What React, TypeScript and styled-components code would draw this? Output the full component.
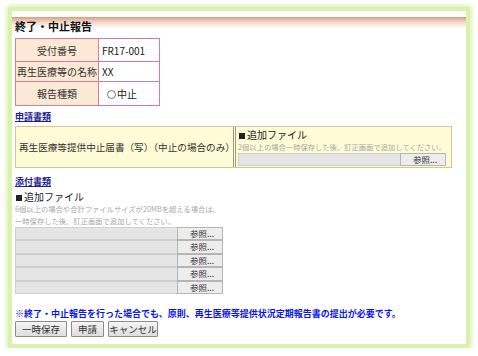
import * as React from 'react';
import styled, { createGlobalStyle } from 'styled-components';

const GlobalStyle = createGlobalStyle`
    html, body {
        margin: 0;
        padding: 0;
        background: #fff;
    }
    body {
        font-family: "Noto Sans CJK JP", "DejaVu Sans", sans-serif;
        color: #222;
    }
`;

const Frame = styled.div`
    width: 454px;
    height: 327px;
    margin: 7px 0 0 8px;
    border: 4px solid #d9f2ad;
    box-shadow: 0 0 4px 2px rgba(214, 240, 168, 0.8);
    border-radius: 2px;
    background: #fff;
    padding-top: 6px;
    box-sizing: content-box;
`;

const TitleBar = styled.div`
    height: 16px;
    line-height: 18px;
    padding-left: 3px;
    font-size: 11px;
    font-weight: 700;
    color: #111;
    background: linear-gradient(to bottom, #d89b7b 0px, #e9c2ac 3px, #f6e6dc 7px, #fff 12px);
`;

const Content = styled.div`
    padding: 0 15px 0 3px;
`;

const InfoTable = styled.table`
    margin-top: 5px;
    border-collapse: collapse;
    border: 1px solid #a3154f;
    font-size: 10px;

    td {
        border: 1px solid #d47c9c;
        padding: 0;
    }
`;

const LabelCell = styled.td<{ $h: number }>`
    width: 82px;
    height: ${p => p.$h}px;
    background: #fbe8d5;
    text-align: center;
    color: #333;
`;

const ValueCell = styled.td<{ $pad?: number }>`
    width: 52px;
    padding-left: ${p => p.$pad ?? 3}px !important;
    color: #222;
`;

const Radio = styled.span`
    display: inline-block;
    width: 7px;
    height: 7px;
    border: 1px solid #777;
    border-radius: 50%;
    margin-right: 1px;
    vertical-align: -1px;
`;

const SectionLink = styled.a<{ $top: number }>`
    display: block;
    width: fit-content;
    margin-top: ${p => p.$top}px;
    height: 12px;
    line-height: 12px;
    font-size: 9px;
    font-weight: 700;
    color: #1c1c96;
    text-decoration: underline;
    cursor: pointer;
`;

const YellowBox = styled.div`
    display: flex;
    margin-top: 3px;
    width: 435px;
    height: 40px;
    border: 1px solid #dcc48e;
    background: #fdfcd7;
`;

const YellowLabel = styled.div`
    width: 214px;
    display: flex;
    align-items: center;
    padding-left: 3px;
    font-size: 9.6px;
    color: #333;
    white-space: nowrap;
`;

const YellowFiles = styled.div`
    flex: 1;
    border-left: 3px double #a7977a;
    padding: 2px 5px 0 2px;
`;

const FileHead = styled.div<{ $top?: number }>`
    margin-top: ${p => p.$top ?? 0}px;
    height: 12px;
    line-height: 12px;
    font-size: 10px;
    color: #222;
`;

const Square = styled.span`
    display: inline-block;
    width: 6px;
    height: 6px;
    background: #222;
    margin: 0 2px 0 1px;
    vertical-align: 0;
`;

const Note = styled.div`
    font-size: 7.3px;
    line-height: 12px;
    color: #a8a8a8;
    white-space: nowrap;
`;

const FileList = styled.div`
    display: flex;
    flex-direction: column;
    margin-top: 0;
    width: 208px;
`;

const FileRow = styled.div`
    display: flex;
    height: 13.4px;
    width: 100%;
`;

const FileField = styled.div`
    flex: 1;
    background: #e5e5e5;
    border: 1px solid #cfcfcf;
    border-right: none;
`;

const BrowseButton = styled.div`
    width: 46px;
    background: #ededed;
    border: 1px solid #b5b5b5;
    font-size: 8.5px;
    line-height: 11px;
    text-align: center;
    color: #333;
    padding-left: 4px;
    box-sizing: border-box;
`;

const Warning = styled.div`
    margin-top: 14px;
    height: 12px;
    line-height: 12px;
    font-size: 9px;
    font-weight: 700;
    color: #0a14f0;
    white-space: nowrap;
`;

const ButtonRow = styled.div`
    display: flex;
    gap: 4px;
    margin-top: 1px;
`;

const Button = styled.button<{ $w: number }>`
    width: ${p => p.$w}px;
    height: 16px;
    padding: 0;
    font-family: "Noto Sans CJK JP", sans-serif;
    font-size: 9.5px;
    line-height: 14px;
    color: #333;
    background: linear-gradient(to bottom, #f4f4f4, #dedede);
    border: 1px solid #8c8c8c;
    border-radius: 1px;
    cursor: pointer;
`;

const App = (): JSX.Element => {
    const rows = [0, 1, 2, 3, 4];
    return (
        <>
            <GlobalStyle />
            <Frame>
                <TitleBar>終了・中止報告</TitleBar>
                <Content>
                    <InfoTable>
                        <tbody>
                            <tr>
                                <LabelCell $h={22}>受付番号</LabelCell>
                                <ValueCell>FR17-001</ValueCell>
                            </tr>
                            <tr>
                                <LabelCell $h={19}>再生医療等の名称</LabelCell>
                                <ValueCell>XX</ValueCell>
                            </tr>
                            <tr>
                                <LabelCell $h={23}>報告種類</LabelCell>
                                <ValueCell $pad={8}><Radio />中止</ValueCell>
                            </tr>
                        </tbody>
                    </InfoTable>

                    <SectionLink $top={5}>申請書類</SectionLink>
                    <YellowBox>
                        <YellowLabel>再生医療等提供中止届書（写）（中止の場合のみ）</YellowLabel>
                        <YellowFiles>
                            <FileHead><Square />追加ファイル</FileHead>
                            <Note>2個以上の場合一時保存した後、訂正画面で追加してください。</Note>
                            <FileRow>
                                <FileField />
                                <BrowseButton>参照...</BrowseButton>
                            </FileRow>
                        </YellowFiles>
                    </YellowBox>

                    <SectionLink $top={8}>添付書類</SectionLink>
                    <FileHead $top={3}><Square />追加ファイル</FileHead>
                    <Note>6個以上の場合や合計ファイルサイズが20MBを超える場合は、</Note>
                    <Note>一時保存した後、訂正画面で追加してください。</Note>
                    <FileList>
                        {rows.map(i => (
                            <FileRow key={i}>
                                <FileField />
                                <BrowseButton>参照...</BrowseButton>
                            </FileRow>
                        ))}
                    </FileList>

                    <Warning>※終了・中止報告を行った場合でも、原則、再生医療等提供状況定期報告書の提出が必要です。</Warning>
                    <ButtonRow>
                        <Button $w={52}>一時保存</Button>
                        <Button $w={33}>申請</Button>
                        <Button $w={50}>キャンセル</Button>
                    </ButtonRow>
                </Content>
            </Frame>
        </>
    );
};

export default App;
